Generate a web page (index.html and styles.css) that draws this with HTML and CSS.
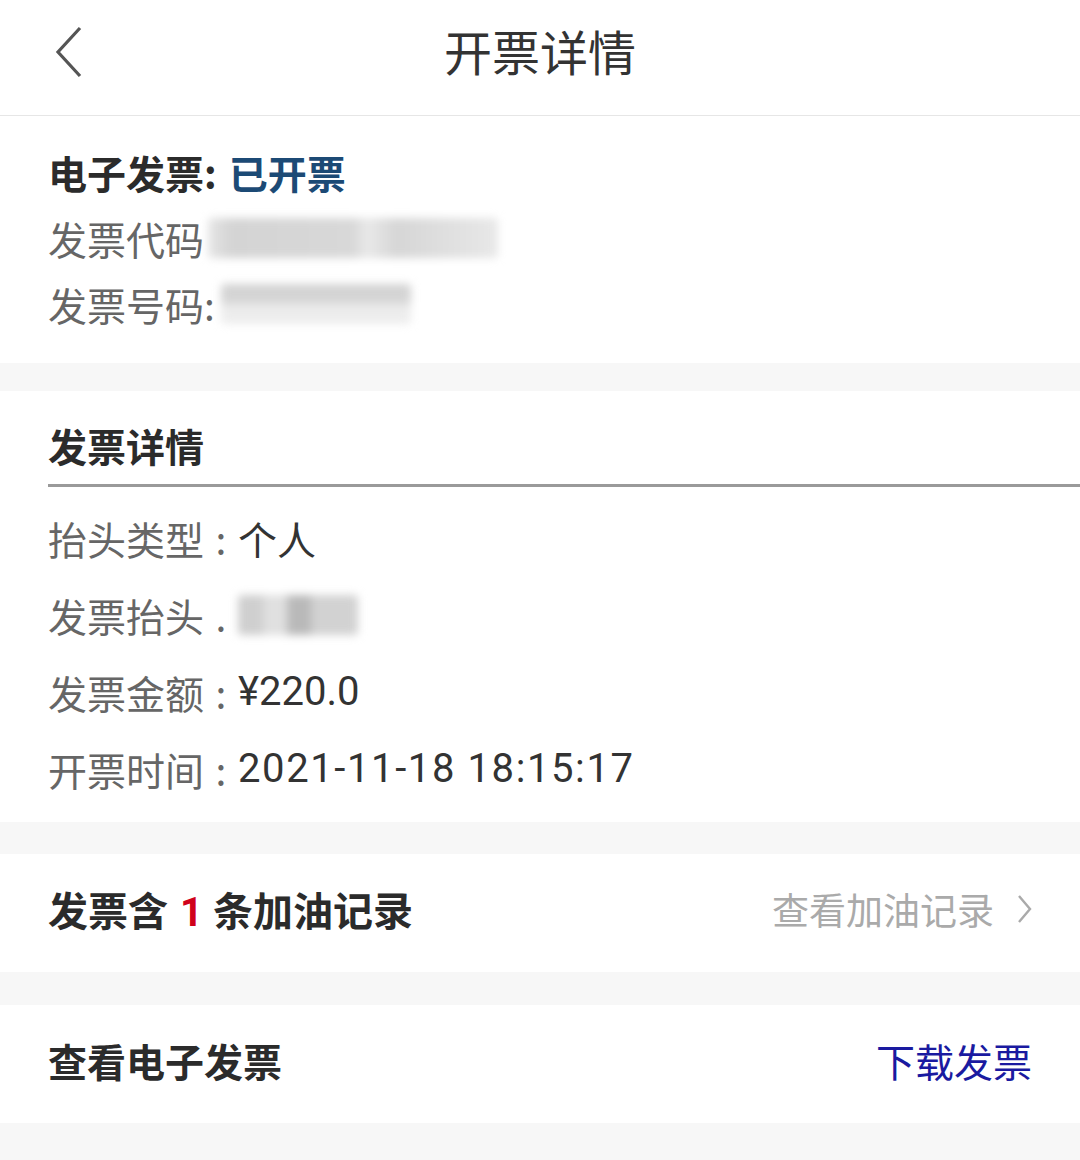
FILE: index.html
```html
<!DOCTYPE html>
<html lang="zh-CN">
<head>
<meta charset="utf-8">
<title>开票详情</title>
<link rel="stylesheet" href="styles.css">
</head>
<body>
<div class="page">
  <header class="topbar">
    <svg class="back" width="40" height="56" viewBox="0 0 40 56"><polyline points="32,4 10,28 32,52" fill="none" stroke="#555" stroke-width="3.2" stroke-linejoin="miter"/></svg>
    <h1 class="title">开票详情</h1>
  </header>

  <section class="card status">
    <div class="status-line"><span class="bold">电子发票:</span> <span class="issued">已开票</span></div>
    <div class="plain-line">发票代码<span class="mask mask-a"></span></div>
    <div class="plain-line">发票号码:<span class="mask mask-b"></span></div>
  </section>

  <section class="card details">
    <div class="sec-title">发票详情</div>
    <div class="divider"></div>
    <div class="row"><span class="label">抬头类型</span><span class="colon">:</span><span class="value">个人</span></div>
    <div class="row"><span class="label">发票抬头</span><span class="colon">.</span><span class="mask mask-c"></span></div>
    <div class="row"><span class="label">发票金额</span><span class="colon">:</span><span class="value num">¥220.0</span></div>
    <div class="row"><span class="label">开票时间</span><span class="colon">:</span><span class="value num date">2021-11-18 18:15:17</span></div>
  </section>

  <section class="card link-row">
    <div class="bold big">发票含<span class="red">1</span>条加油记录</div>
    <div class="more">查看加油记录
      <svg class="chev" width="16" height="30" viewBox="0 0 16 30"><polyline points="3,2 14,15 3,28" fill="none" stroke="#aaa" stroke-width="2.4"/></svg>
    </div>
  </section>

  <section class="card link-row">
    <div class="bold">查看电子发票</div>
    <div class="download">下载发票</div>
  </section>
</div>
</body>
</html>
```

FILE: styles.css
```css
html, body {
  margin: 0;
  padding: 0;
  background: #f7f7f7;
}
body {
  font-family: "Noto Sans CJK SC", "Noto Sans", sans-serif;
  color: #333;
}
.page {
  width: 1080px;
  min-height: 1160px;
  background: #f7f7f7;
}
.topbar {
  height: 115px;
  background: #fff;
  border-bottom: 1px solid #e6e6e6;
  display: flex;
  align-items: center;
  justify-content: center;
  position: relative;
}
.back {
  position: absolute;
  left: 48px;
  top: 24px;
}
.title {
  margin: 0;
  font-size: 48px;
  font-weight: 400;
  color: #333;
  line-height: 1;
  margin-top: -16px;
}
.card {
  background: #fff;
  padding-left: 48px;
}
.status {
  padding-top: 23px;
  padding-bottom: 26px;
  margin-bottom: 28px;
}
.status-line, .plain-line {
  height: 66px;
  line-height: 66px;
  font-size: 39px;
  display: flex;
  align-items: center;
}
.bold {
  font-weight: 700;
  color: #2b2b2b;
  font-size: 39px;
}
.big {
  font-size: 40px;
}
.status-line .bold { margin-right: 12px; }
.issued {
  color: #1c4a75;
  font-weight: 700;
}
.plain-line {
  color: #666;
}
.mask {
  display: inline-block;
  height: 40px;
  filter: blur(4px);
  border-radius: 4px;
}
.mask-a {
  width: 290px;
  margin-left: 4px;
  background: linear-gradient(90deg, #e6e6e6 0, #d4d4d4 8%, #d8d8d8 50%, #e9e9e9 55%, #d6d6d6 65%, #dedede 80%, #e8e8e8 100%);
}
.mask-b {
  width: 190px;
  margin-left: 6px;
  background: linear-gradient(180deg, #d2d2d2 0, #d6d6d6 45%, #ececec 55%, #eeeeee 100%);
}
.mask-c {
  width: 120px;
  background: linear-gradient(90deg, #cfcfcf 0, #cfcfcf 20%, #e0e0e0 22%, #e0e0e0 40%, #b9b9b9 42%, #b9b9b9 60%, #d2d2d2 62%, #d2d2d2 100%);
}
.details {
  padding-top: 24px;
  padding-bottom: 15px;
  margin-bottom: 32px;
}
.sec-title {
  font-size: 39px;
  font-weight: 700;
  color: #2b2b2b;
  height: 60px;
  line-height: 60px;
}
.divider {
  height: 3px;
  background: #9a9a9a;
  margin-top: 9px;
  margin-bottom: 12px;
}
.row {
  height: 77px;
  display: flex;
  align-items: center;
  font-size: 39px;
}
.label {
  color: #666;
}
.colon {
  color: #666;
  width: 34px;
  text-align: center;
}
.value {
  color: #333;
}
.num {
  font-family: "Roboto", "Noto Sans CJK SC", sans-serif;
  font-size: 40px;
}
.date {
  letter-spacing: 1.6px;
}
.link-row {
  height: 118px;
  padding-right: 48px;
  display: flex;
  align-items: center;
  justify-content: space-between;
  margin-bottom: 33px;
}
.link-row > div {
  margin-top: -8px;
}
.red {
  color: #d0021b;
  font-family: "Roboto", sans-serif;
  margin: 0 10px 0 12px;
}
.more {
  color: #aaa;
  font-size: 37px;
  display: flex;
  align-items: center;
  gap: 22px;
}
.download {
  color: #1a1aa0;
  font-size: 39px;
}
```
